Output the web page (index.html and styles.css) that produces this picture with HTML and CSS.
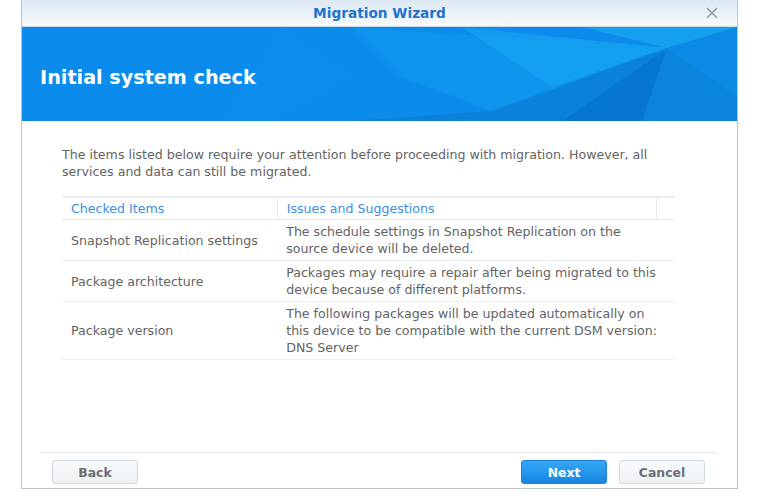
FILE: index.html
```html
<!DOCTYPE html>
<html lang="en">
<head>
    <meta charset="UTF-8">
    <title>Migration Wizard</title>
    <link rel="stylesheet" href="styles.css">
</head>
<body>
    <div class="window">
        <div class="titlebar">
            <span class="title">Migration Wizard</span>
            <svg class="close" width="12" height="12" viewBox="0 0 12 12">
                <path d="M1 1 L11 11 M11 1 L1 11" stroke="#979ca1" stroke-width="1.5" fill="none"/>
            </svg>
        </div>

        <div class="banner">
            <!-- triangles in the header background -->
            <svg class="banner-bg" viewBox="0 0 715 94" preserveAspectRatio="none">
                <polygon points="330,0 645,21 470,84 380,50" fill="#129ff0" opacity="0.4"/>
                <polygon points="440,0 645,21 530,60" fill="#1cacf3" opacity="0.5"/>
                <polygon points="560,0 715,0 645,21" fill="#15a0ee"/>
                <polygon points="645,21 715,0 715,70" fill="#0a8ae4"/>
                <polygon points="645,21 715,70 715,94 620,94" fill="#0a84dd"/>
                <polygon points="645,21 620,94 540,94" fill="#0776d2"/>
                <polygon points="645,21 540,94 440,94 470,84" fill="#0a82dc"/>
                <polygon points="330,94 470,84 440,94" fill="#0a80d9"/>
                <polygon points="260,0 330,50 250,94 200,94" fill="#0d93ee" opacity="0.3"/>
            </svg>
            <h1>Initial system check</h1>
        </div>

        <div class="content">
            <p>The items listed below require your attention before proceeding with migration. However, all services and data can still be migrated.</p>

            <table class="checks">
                <thead>
                    <tr>
                        <th class="col-item">Checked Items</th>
                        <th class="col-issue">Issues and Suggestions</th>
                        <th class="col-pad"></th>
                    </tr>
                </thead>
                <tbody>
                    <tr>
                        <td>Snapshot Replication settings</td>
                        <td colspan="2">The schedule settings in Snapshot Replication on the source device will be deleted.</td>
                    </tr>
                    <tr>
                        <td>Package architecture</td>
                        <td colspan="2">Packages may require a repair after being migrated to this device because of different platforms.</td>
                    </tr>
                    <tr>
                        <td>Package version</td>
                        <td colspan="2">The following packages will be updated automatically on this device to be compatible with the current DSM version:<br>DNS Server</td>
                    </tr>
                </tbody>
            </table>
        </div>

        <div class="footer">
            <button class="btn">Back</button>
            <div class="spacer"></div>
            <button class="btn btn-primary">Next</button>
            <button class="btn">Cancel</button>
        </div>
    </div>
</body>
</html>
```

FILE: styles.css
```css
body {
    margin: 0;
    background: #ffffff;
    font-family: "DejaVu Sans", Verdana, sans-serif;
    font-size: 12.6px;
    color: #636363;
}

.window {
    margin-left: 21px;
    width: 715px;
    height: 488px;
    border: 1px solid #bcc3ca;
    border-top: none;
    display: flex;
    flex-direction: column;
    background: #ffffff;
}

.titlebar {
    height: 26px;
    border-bottom: 1px solid #c9d5e1;
    background: linear-gradient(#dde9f5, #f6f9fc);
    display: flex;
    align-items: center;
    justify-content: center;
    position: relative;
}

.title {
    font-weight: bold;
    font-size: 13.7px;
    color: #1c73cc;
}

.close {
    position: absolute;
    right: 19px;
    top: 7px;
}

.banner {
    height: 94px;
    background: #0b8cec;
    position: relative;
    overflow: hidden;
    display: flex;
    align-items: center;
}

.banner-bg {
    position: absolute;
    left: 0;
    top: 0;
    width: 100%;
    height: 100%;
}

.banner h1 {
    position: relative;
    margin: 0 0 0 18px;
    padding-top: 6px;
    color: #ffffff;
    font-size: 19.2px;
    font-weight: bold;
}

.content {
    flex: 1;
    padding: 25px 62px 0 40px;
}

.content p {
    margin: 0 0 16px 0;
    line-height: 17px;
}

.checks {
    width: 613px;
    border-collapse: collapse;
    border-top: 2px solid #eaeef3;
}

.checks th {
    text-align: left;
    font-weight: normal;
    color: #3b8ee4;
    height: 21px;
    padding: 0 9px;
    border-bottom: 1px solid #e6ebf0;
}

.checks th.col-item {
    width: 197px;
    border-right: 1px solid #e3eaf1;
}

.checks th.col-issue {
    width: 361px;
    border-right: 1px solid #e3eaf1;
}

.checks td {
    padding: 3px 9px;
    line-height: 17px;
    vertical-align: middle;
    border-bottom: 1px solid #eceff3;
}

.footer {
    margin: 0 20px 0 18px;
    border-top: 1px solid #e4e8ec;
    padding: 7px 12px 4px 12px;
    display: flex;
    gap: 12px;
}

.spacer {
    flex: 1;
}

.btn {
    width: 86px;
    height: 24px;
    border: 1px solid #cfd8e1;
    border-radius: 3px;
    background: linear-gradient(#f8fafc, #eef2f6);
    font-family: "DejaVu Sans", Verdana, sans-serif;
    font-size: 12.4px;
    font-weight: bold;
    color: #6a6f74;
}

.btn-primary {
    border-color: #1a80d8;
    background: linear-gradient(#33a6f6, #1886e2);
    color: #ffffff;
}
```
